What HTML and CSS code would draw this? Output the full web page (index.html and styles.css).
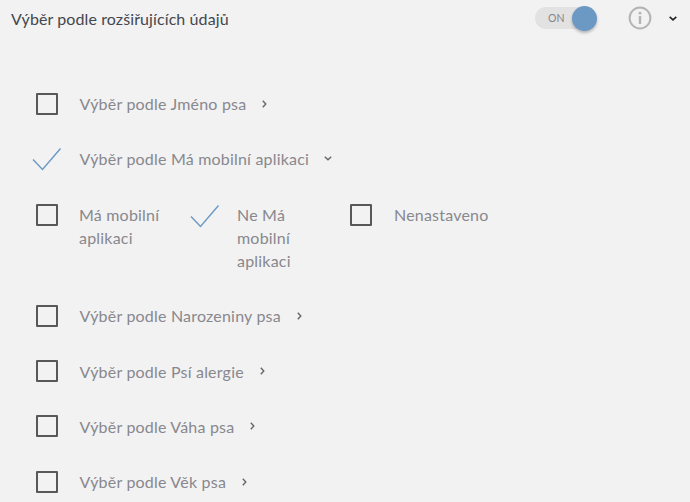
FILE: index.html
```html
<!DOCTYPE html>
<html lang="cs">
<head>
<meta charset="utf-8">
<title>Výběr podle rozšiřujících údajů</title>
<link rel="stylesheet" href="styles.css">
</head>
<body>
<header class="head">
  <h1 class="title">Výběr podle rozšiřujících údajů</h1>
  <div class="toggle"><span class="toggle-label">ON</span><span class="knob"></span></div>
  <svg class="info" width="24" height="24" viewBox="0 0 24 24"><circle cx="12" cy="12" r="10.4" fill="none" stroke="#b4b4b4" stroke-width="2"/><circle cx="12" cy="7.200" r="1.400" fill="#b4b4b4"/><rect x="10.800" y="10" width="2.400" height="8" fill="#b4b4b4"/></svg>
  <svg class="head-chev" width="8" height="5" viewBox="0 0 8 5"><path d="M.7.800l3.300 3 3.300-3" fill="none" stroke="#222" stroke-width="1.600"/></svg>
</header>
<ul class="list">
  <li class="row"><span class="box"></span><span class="label">Výběr podle Jméno psa</span><svg class="chev" width="5" height="8" viewBox="0 0 5 8"><path d="M.8.800l3 3.200-3 3.200" fill="none" stroke="#666" stroke-width="1.400"/></svg></li>
  <li class="row"><svg class="check" width="30" height="24" viewBox="0 0 30 24"><path d="M1 12.500L10.500 22.500L28.500 1.500" fill="none" stroke="#6c98c4" stroke-width="1.400"/></svg><span class="label">Výběr podle Má mobilní aplikaci</span><svg class="chev-d" width="8" height="5" viewBox="0 0 8 5"><path d="M.8.800l3.200 3 3.200-3" fill="none" stroke="#666" stroke-width="1.400"/></svg></li>
  <li class="sub">
    <div class="opt opt-a"><span class="box"></span><span class="opt-label">Má mobilní aplikaci</span></div>
    <div class="opt opt-b"><svg class="check" width="30" height="24" viewBox="0 0 30 24"><path d="M1 12.500L10.500 22.500L28.500 1.500" fill="none" stroke="#6c98c4" stroke-width="1.400"/></svg><span class="opt-label">Ne Má mobilní aplikaci</span></div>
    <div class="opt opt-c"><span class="box"></span><span class="opt-label">Nenastaveno</span></div>
  </li>
  <li class="row"><span class="box"></span><span class="label">Výběr podle Narozeniny psa</span><svg class="chev" width="5" height="8" viewBox="0 0 5 8"><path d="M.8.800l3 3.200-3 3.200" fill="none" stroke="#666" stroke-width="1.400"/></svg></li>
  <li class="row"><span class="box"></span><span class="label">Výběr podle Psí alergie</span><svg class="chev" width="5" height="8" viewBox="0 0 5 8"><path d="M.8.800l3 3.200-3 3.200" fill="none" stroke="#666" stroke-width="1.400"/></svg></li>
  <li class="row"><span class="box"></span><span class="label">Výběr podle Váha psa</span><svg class="chev" width="5" height="8" viewBox="0 0 5 8"><path d="M.8.800l3 3.200-3 3.200" fill="none" stroke="#666" stroke-width="1.400"/></svg></li>
  <li class="row"><span class="box"></span><span class="label">Výběr podle Věk psa</span><svg class="chev" width="5" height="8" viewBox="0 0 5 8"><path d="M.8.800l3 3.200-3 3.200" fill="none" stroke="#666" stroke-width="1.400"/></svg></li>
</ul>
</body>
</html>
```
FILE: styles.css
```css
* { box-sizing: border-box; }
html, body { margin: 0; padding: 0; }
body {
  width: 690px;
  height: 502px;
  overflow: hidden;
  background: #f2f2f2;
  font-family: "Lato", "Open Sans", sans-serif;
  font-size: 16px;
  letter-spacing: .2px;
  color: #88888e;
}
.head {
  display: flex;
  align-items: center;
  height: 36px;
  padding: 0 13px 0 11px;
}
.title {
  margin: 0 auto 0 0;
  font-size: 16px;
  font-weight: 400;
  letter-spacing: .1px;
  color: #44474d;
}
.toggle {
  position: relative;
  display: flex;
  align-items: center;
  width: 57px;
  height: 22px;
  padding-left: 13px;
  border-radius: 11px;
  background: #e2e2e2;
}
.toggle-label { font-size: 10.5px; letter-spacing: 0; color: #85858a; }
.knob {
  position: absolute;
  right: -5px;
  top: -1px;
  width: 25px;
  height: 25px;
  border-radius: 50%;
  background: #6c98c4;
  box-shadow: 0 2px 3px rgba(0, 0, 0, .25);
}
.info { margin-left: 36px; }
.head-chev { margin-left: 17px; }
.list {
  list-style: none;
  margin: 0;
  padding: 40px 0 0 36px;
}
.row {
  display: flex;
  align-items: center;
  height: 55.2px;
}
.box {
  flex: none;
  width: 22px;
  height: 22px;
  border: 2px solid #58585a;
  border-radius: 1px;
}
.check { flex: none; margin-left: -4px; margin-right: -4px; }
.label { margin-left: 21.5px; }
.chev { margin-left: 16px; }
.chev-d { margin-left: 15px; }
.sub {
  display: flex;
  height: 102px;
  padding-top: 17px;
  line-height: 23px;
}
.opt { display: flex; align-items: flex-start; }
.opt .box, .opt .check { margin-top: 1px; }
.opt-a { width: 158px; }
.opt-b { width: 156px; }
.opt-label { margin-left: 21px; }
.opt-a .opt-label { width: 90px; }
.opt-b .opt-label { width: 62px; }
.opt-c .opt-label { width: 110px; margin-left: 22px; }
```
